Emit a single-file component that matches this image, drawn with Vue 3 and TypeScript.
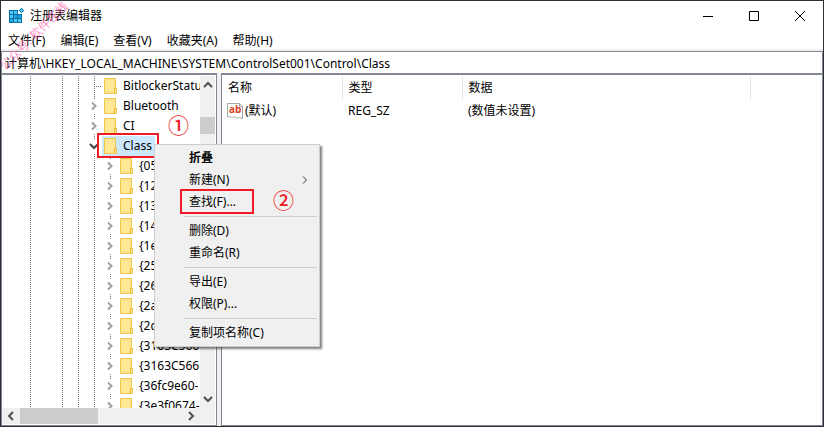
<script setup lang="ts">
import { ref } from 'vue'

interface TreeNode {
  label: string
  level: 1 | 2
  state: 'leaf' | 'closed' | 'open'
}

interface MenuEntry {
  label: string
  bold?: boolean
  submenu?: boolean
  marked?: boolean
}

const menus = ['文件(F)', '编辑(E)', '查看(V)', '收藏夹(A)', '帮助(H)']
const path = ref('计算机\\HKEY_LOCAL_MACHINE\\SYSTEM\\ControlSet001\\Control\\Class')

const topKeys: TreeNode[] = [
  { label: 'BitlockerStatus', level: 1, state: 'leaf' },
  { label: 'Bluetooth', level: 1, state: 'closed' },
  { label: 'CI', level: 1, state: 'closed' },
  { label: 'Class', level: 1, state: 'open' },
]
const classIds = [
  '{05', '{12', '{13', '{14', '{1e', '{25', '{26',
  '{2a', '{2d', '{3163C566', '{3163C566', '{36fc9e60-', '{3e3f0674-',
]
const nodes: TreeNode[] = [
  ...topKeys,
  ...classIds.map((label): TreeNode => ({ label, level: 2, state: 'closed' })),
]

const groups: MenuEntry[][] = [
  [{ label: '折叠', bold: true }, { label: '新建(N)', submenu: true }, { label: '查找(F)...', marked: true }],
  [{ label: '删除(D)' }, { label: '重命名(R)' }],
  [{ label: '导出(E)' }, { label: '权限(P)...' }],
  [{ label: '复制项名称(C)' }],
]
</script>

<template>
  <div class="window">
    <header class="titlebar">
      <svg class="app-icon" viewBox="0 0 16 16" aria-hidden="true">
        <path d="M0 2h9v4h4v9H0z" fill="#0b6fa8" />
        <path d="M1 3h3v3H1zM5 3h3v3H5zM1 7h3v3H1zM5 11h3v3H5zM9 11h3v3H9z" fill="#4cc8f4" />
        <path d="M5 7h3v3H5zM9 7h3v3H9zM1 11h3v3H1z" fill="#1fa2dc" />
        <path d="M12.500 -.5l3 3-3 3-3-3z" fill="#1583b8" stroke="#fff" stroke-width=".5" />
        <path d="M12.500 1L14 2.500 12.500 4 11 2.500z" fill="#54c9f2" />
      </svg>
      <h1>注册表编辑器</h1>
      <div class="controls">
        <button type="button" aria-label="最小化"><svg viewBox="0 0 10 10"><path d="M0 5.500h10" /></svg></button>
        <button type="button" aria-label="最大化"><svg viewBox="0 0 10 10"><path d="M.5.5h9v9h-9z" /></svg></button>
        <button type="button" aria-label="关闭"><svg viewBox="0 0 10 10"><path d="M0 0l10 10M10 0L0 10" /></svg></button>
      </div>
    </header>

    <nav class="menubar">
      <button v-for="m in menus" :key="m" type="button">{{ m }}</button>
    </nav>

    <input v-model="path" class="address" type="text" aria-label="地址" spellcheck="false" />

    <main class="panes">
      <section class="tree-pane">
        <div class="tree-body">
          <ul class="tree">
            <li v-for="(n, i) in nodes" :key="i" :class="['node', 'level-' + n.level, n.state]">
              <i class="guide g1"></i><i class="guide g2"></i><i class="guide g3"></i><i class="guide g4"></i>
              <i v-if="n.level === 2" class="guide g5"></i>
              <span class="toggle">
                <svg v-if="n.state === 'closed'" viewBox="0 0 10 10"><path d="M3 1.500L6.500 5 3 8.500" /></svg>
                <svg v-else-if="n.state === 'open'" viewBox="0 0 10 10"><path d="M1 3l4 4 4-4" /></svg>
                <i v-else class="dash"></i>
              </span>
              <span class="key">
                <svg class="folder" viewBox="0 0 13 16" aria-hidden="true">
                  <path d="M.5.5h11v10h1v5H.5z" fill="#ffe793" stroke="#edc54a" />
                  <path d="M10.500 15V10.500h2" fill="none" stroke="#e3b635" />
                </svg>
                <span>{{ n.label }}</span>
              </span>
            </li>
          </ul>
          <div class="vscroll">
            <svg viewBox="0 0 8 8"><path d="M0 6l4-4 4 4" /></svg>
            <div class="vtrack"><div class="vthumb"></div></div>
            <svg viewBox="0 0 8 8"><path d="M0 2l4 4 4-4" /></svg>
          </div>
        </div>
        <div class="hscroll">
          <svg viewBox="0 0 8 8"><path d="M6 0L2 4l4 4" /></svg>
          <div class="htrack"><div class="hthumb"></div></div>
          <svg viewBox="0 0 8 8"><path d="M2 0l4 4-4 4" /></svg>
        </div>
      </section>

      <section class="list-pane">
        <table>
          <thead>
            <tr><th class="c-name">名称</th><th class="c-type">类型</th><th class="c-data">数据</th><th class="c-rest"></th></tr>
          </thead>
          <tbody>
            <tr>
              <td>
                <span class="value">
                  <svg class="string-icon" viewBox="0 0 16 16" aria-hidden="true">
                    <path d="M.5.5h12l3 3v12l-3-1-2 1-3-2-2 1-3-1-2 .5z" fill="#fff" stroke="#a8a8a8" />
                    <path d="M12.500.5v3h3" fill="none" stroke="#a8a8a8" />
                    <text x="2" y="10">ab</text>
                  </svg>
                  <span>(默认)</span>
                </span>
              </td>
              <td>REG_SZ</td>
              <td>(数值未设置)</td>
              <td></td>
            </tr>
          </tbody>
        </table>
      </section>
    </main>

    <div class="frame-class"></div>
    <div class="context-menu" role="menu">
      <div v-for="(g, gi) in groups" :key="gi" class="group">
        <button v-for="e in g" :key="e.label" type="button" role="menuitem" :class="{ bold: e.bold }">
          <span>{{ e.label }}</span>
          <svg v-if="e.submenu" viewBox="0 0 8 8"><path d="M2 0.500L5.500 4 2 7.500" /></svg>
          <i v-if="e.marked" class="frame-find"></i>
        </button>
      </div>
    </div>
    <span class="step step-1">①</span>
    <span class="step step-2">②</span>
    <span class="watermark">公众号: 软件在线</span>
  </div>
</template>

<style>
body {
  margin: 0;
}
</style>

<style scoped>
.window {
  position: relative;
  box-sizing: border-box;
  height: 100vh;
  display: flex;
  flex-direction: column;
  overflow: hidden;
  border: 1px solid #2b2f36;
  background: #fff;
  color: #000;
  font: 12px/20px "Noto Sans", "Noto Sans CJK SC", sans-serif;
}
button {
  border: 0;
  padding: 0;
  background: none;
  color: inherit;
  font: inherit;
}
svg {
  display: block;
  overflow: visible;
}
.titlebar {
  display: flex;
  align-items: center;
  height: 30px;
  padding-left: 8px;
}
.app-icon {
  width: 16px;
  height: 16px;
}
h1 {
  flex: 1;
  margin: 0 0 0 5px;
  font-size: 12px;
  font-weight: 400;
}
.controls {
  display: flex;
}
.controls button {
  display: grid;
  place-items: center;
  width: 46px;
  height: 30px;
}
.controls svg {
  width: 10px;
  height: 10px;
  fill: none;
  stroke: #000;
}
.menubar {
  display: flex;
  gap: 15px;
  height: 18px;
  padding-left: 7px;
  border-bottom: 2px solid #f0f0f0;
}
.address {
  box-sizing: border-box;
  width: 100%;
  height: 22px;
  border: 1px solid #828790;
  border-bottom: 0;
  padding: 1px 3px 0;
  outline: 0;
  background: #fff;
  color: #000;
  font: inherit;
}
.panes {
  flex: 1;
  display: flex;
  gap: 4px;
  min-height: 0;
  background: #f0f0f0;
}
.tree-pane,
.list-pane {
  box-sizing: border-box;
  border: 1px solid #828790;
  border-top-width: 2px;
  background: #fff;
}
.tree-pane {
  display: flex;
  flex-direction: column;
  flex: 0 0 216px;
  min-width: 0;
  padding: 1px 1px 1px 0;
}
.tree-body {
  flex: 1;
  display: flex;
  min-height: 0;
}
.tree {
  flex: 1;
  min-width: 0;
  margin: 0;
  padding: 0;
  overflow: hidden;
  list-style: none;
}
.node {
  display: grid;
  grid-template-columns: 28px 32px 16px 8px 8px 8px;
  height: 20px;
  white-space: nowrap;
}
.guide {
  grid-row: 1;
  height: 20px;
  width: 1px;
  background: repeating-linear-gradient(#777 0 1px, transparent 1px 2px);
}
.g1 { grid-column: 2; }
.g2 { grid-column: 3; }
.g3 { grid-column: 4; }
.g4 { grid-column: 6; }
.g5 { grid-column: 7; margin-left: 8px; }
.toggle {
  grid-row: 1;
  grid-column: 5 / 8;
  align-self: center;
  display: grid;
  place-items: center;
  width: 12px;
  height: 14px;
  margin-left: 2px;
  background: #fff;
}
.level-2 .toggle {
  grid-column: 7;
}
.leaf .toggle {
  background: none;
}
.toggle svg {
  width: 10px;
  height: 10px;
  fill: none;
  stroke: #a0a0a0;
  stroke-width: 2;
}
.open .toggle svg {
  stroke: #404040;
}
.dash {
  width: 6px;
  height: 1px;
  margin-left: 8px;
  background: repeating-linear-gradient(90deg, #777 0 1px, transparent 1px 2px);
}
.key {
  grid-row: 1;
  grid-column: 7;
  display: flex;
  align-items: center;
  gap: 3px;
  padding: 0 3px 0 2px;
}
.level-1 .key {
  justify-self: start;
}
.level-2 .key {
  margin-left: 16px;
}
.open .key {
  background: #cce8ff;
}
.folder {
  flex: none;
  width: 13px;
  height: 16px;
  margin-right: 3px;
}
.vscroll {
  display: flex;
  flex-direction: column;
  align-items: center;
  width: 15px;
  padding: 5px 0;
  background: #f0f0f0;
}
.vscroll svg,
.hscroll svg {
  width: 8px;
  height: 8px;
  fill: none;
  stroke: #505050;
  stroke-width: 2;
}
.vtrack {
  flex: 1;
  align-self: stretch;
  padding-top: 28px;
}
.vthumb {
  height: 17px;
  background: #cdcdcd;
}
.hscroll {
  display: flex;
  align-items: center;
  height: 16px;
  padding: 0 20px 0 5px;
  background: #f0f0f0;
}
.htrack {
  flex: 1;
  padding-left: 5px;
}
.hthumb {
  width: 78px;
  height: 16px;
  background: #cdcdcd;
}
.list-pane {
  flex: 1;
  padding-top: 1px;
}
table {
  width: 100%;
  table-layout: fixed;
  border-collapse: collapse;
}
th,
td {
  box-sizing: border-box;
  height: 24px;
  padding: 0 6px;
  text-align: left;
  font-weight: 400;
}
td {
  height: 22px;
}
th {
  border-right: 1px solid #e5e5e5;
}
.c-name,
.c-type {
  width: 120px;
}
.c-data {
  width: 288px;
}
.c-rest {
  border: 0;
}
.value {
  display: flex;
  align-items: center;
  gap: 2px;
  margin-left: -1px;
}
.string-icon {
  width: 16px;
  height: 16px;
}
.string-icon text {
  fill: #d8401e;
  font: 700 10px "Open Sans", sans-serif;
}
.frame-class {
  position: absolute;
  left: 96px;
  top: 132px;
  box-sizing: border-box;
  width: 62px;
  height: 25px;
  border: 2px solid #ed1c24;
}
.context-menu {
  position: absolute;
  left: 153px;
  top: 143px;
  box-sizing: border-box;
  width: 166px;
  padding: 2px;
  border: 1px solid #ccc;
  background: #f0f0f0;
  box-shadow: 2px 2px 2px rgba(0, 0, 0, 0.5);
}
.group + .group {
  margin-top: 3px;
  padding-top: 3px;
  border-top: 1px solid #d0d0d0;
  border-image: linear-gradient(90deg, transparent 28px, #d0d0d0 28px) 1;
}
.context-menu button {
  position: relative;
  display: flex;
  align-items: center;
  justify-content: space-between;
  width: 100%;
  height: 22px;
  padding: 0 8px 0 32px;
}
.context-menu svg {
  width: 8px;
  height: 8px;
  fill: none;
  stroke: #333;
}
.context-menu .bold {
  font-weight: 700;
}
.frame-find {
  position: absolute;
  left: 23px;
  top: -2px;
  box-sizing: border-box;
  width: 74px;
  height: 25px;
  border: 2px solid #ed1c24;
}
.step {
  position: absolute;
  color: #ed1c24;
  font: 500 21px/22px "Noto Sans CJK SC", sans-serif;
}
.step-1 {
  left: 167px;
  top: 112px;
}
.step-2 {
  left: 272px;
  top: 187px;
}
.watermark {
  position: absolute;
  left: -22px;
  top: 25px;
  width: 110px;
  text-align: center;
  white-space: nowrap;
  color: #ff5fae;
  opacity: 0.7;
  transform: rotate(-45deg);
  pointer-events: none;
}
</style>
